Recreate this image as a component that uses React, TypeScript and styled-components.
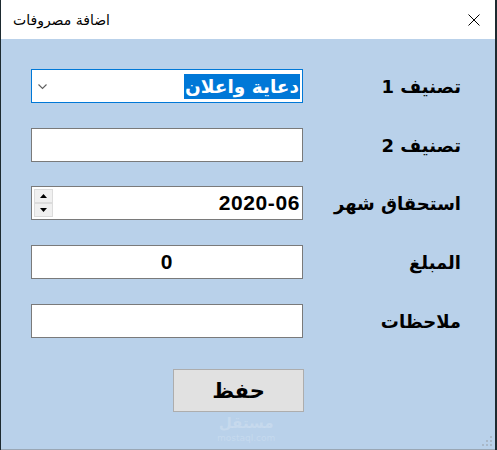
import React from "react";
import styled, { createGlobalStyle } from "styled-components";

const GlobalStyle = createGlobalStyle`
  html, body {
    margin: 0;
    padding: 0;
    background: #1d2a30;
  }
  body {
    width: 497px;
    height: 450px;
    overflow: hidden;
  }
`;

const Window = styled.div`
  margin-left: 1px;
  width: 494px;
  height: 449px;
  display: flex;
  flex-direction: column;
  background: #b9d1ea;
  border-bottom: 1px solid #9aa7b4;
`;

const TitleBar = styled.div`
  height: 39px;
  flex: none;
  background: #ffffff;
  display: flex;
  align-items: center;
  justify-content: space-between;
  padding: 0 15px 0 12px;
  box-sizing: border-box;
`;

const Title = styled.span`
  font-family: "DejaVu Sans", sans-serif;
  font-size: 14px;
  color: #000;
  direction: rtl;
`;

const Client = styled.div`
  position: relative;
  flex: 1;
  display: grid;
  grid-template-columns: 272px 1fr;
  row-gap: 24.7px;
  align-content: start;
  padding: 30px 34px 0 30px;
`;

const Label = styled.div`
  font-family: "DejaVu Sans", sans-serif;
  font-weight: bold;
  font-size: 18px;
  color: #000;
  direction: rtl;
  text-align: right;
  align-self: center;
  padding-top: 1px;
`;

const Field = styled.div<{ $focused?: boolean; $align?: string }>`
  height: 34px;
  box-sizing: border-box;
  background: #fff;
  border: 1px solid ${(p) => (p.$focused ? "#0078d7" : "#7a7a7a")};
  display: flex;
  align-items: center;
  justify-content: ${(p) => p.$align || "flex-end"};
  padding: 0 2px;
  position: relative;
`;

const Selected = styled.span`
  font-family: "DejaVu Sans", sans-serif;
  font-weight: bold;
  font-size: 18.5px;
  color: #fff;
  background: #0078d7;
  direction: rtl;
  line-height: 25px;
  padding: 0 1px;
`;

const Chevron = styled.svg`
  position: absolute;
  left: 6px;
  top: 14px;
`;

const Value = styled.span`
  font-family: "Liberation Sans", sans-serif;
  font-weight: bold;
  font-size: 21px;
  color: #000;
  letter-spacing: 0.6px;
`;

const Spinner = styled.div`
  position: absolute;
  left: 2px;
  top: 2px;
  display: flex;
  flex-direction: column;
`;

const SpinButton = styled.div`
  width: 19px;
  height: 14px;
  box-sizing: border-box;
  background: #f0f0f0;
  border: 1px solid #dcdcdc;
  display: flex;
  align-items: center;
  justify-content: center;
`;

const SaveButton = styled.button`
  grid-column: 1;
  justify-self: end;
  width: 131px;
  height: 43px;
  margin-top: 7px;
  margin-right: -1px;
  background: #e1e1e1;
  border: 1px solid #adadad;
  font-family: "DejaVu Sans", sans-serif;
  font-weight: bold;
  font-size: 21px;
  color: #000;
  padding: 0;
`;

const Watermark = styled.div`
  position: absolute;
  left: 216px;
  top: 376px;
  display: flex;
  flex-direction: column;
  align-items: center;
  gap: 2px;
  color: rgba(255, 255, 255, 0.2);
  font-family: "DejaVu Sans", sans-serif;
  pointer-events: none;
`;

const WmArabic = styled.span`
  font-size: 15px;
  font-weight: bold;
  line-height: 16px;
`;

const WmLatin = styled.span`
  font-size: 9px;
  line-height: 10px;
`;

const Grip = styled.svg`
  position: absolute;
  right: 2px;
  bottom: 2px;
`;

const rows = [
  { label: "تصنيف 1", kind: "combo" },
  { label: "تصنيف 2", kind: "text" },
  { label: "استحقاق شهر", kind: "date" },
  { label: "المبلغ", kind: "amount" },
  { label: "ملاحظات", kind: "text" },
];

function renderField(kind: string) {
  if (kind === "combo") {
    return (
      <Field $focused>
        <Chevron width="9" height="6" viewBox="0 0 9 6">
          <path d="M0.5 0.5 L4.5 4.5 L8.5 0.5" fill="none" stroke="#606060" strokeWidth="1.1" />
        </Chevron>
        <Selected>دعاية واعلان</Selected>
      </Field>
    );
  }
  if (kind === "date") {
    return (
      <Field>
        <Spinner>
          <SpinButton>
            <svg width="7" height="4" viewBox="0 0 7 4">
              <path d="M0 4 L3.5 0 L7 4 Z" fill="#000" />
            </svg>
          </SpinButton>
          <SpinButton>
            <svg width="7" height="4" viewBox="0 0 7 4">
              <path d="M0 0 L3.5 4 L7 0 Z" fill="#000" />
            </svg>
          </SpinButton>
        </Spinner>
        <Value>2020-06</Value>
      </Field>
    );
  }
  if (kind === "amount") {
    return (
      <Field $align="center">
        <Value>0</Value>
      </Field>
    );
  }
  return <Field />;
}

export default function App() {
  return (
    <>
      <GlobalStyle />
      <Window>
        <TitleBar>
          <Title>اضافة مصروفات</Title>
          <svg width="12" height="12" viewBox="0 0 12 12">
            <path d="M0.5 0.5 L11.5 11.5 M11.5 0.5 L0.5 11.5" stroke="#000" strokeWidth="1" />
          </svg>
        </TitleBar>
        <Client>
          {rows.map((r, i) => (
            <React.Fragment key={i}>
              {renderField(r.kind)}
              <Label>{r.label}</Label>
            </React.Fragment>
          ))}
          <SaveButton>حفظ</SaveButton>
          <Watermark>
            <WmArabic>مستقل</WmArabic>
            <WmLatin>mostaql.com</WmLatin>
          </Watermark>
          <Grip width="11" height="11" viewBox="0 0 11 11">
            <rect x="8" y="0" width="2" height="2" fill="#a9b8c8" />
            <rect x="4" y="4" width="2" height="2" fill="#a9b8c8" />
            <rect x="8" y="4" width="2" height="2" fill="#a9b8c8" />
            <rect x="0" y="8" width="2" height="2" fill="#a9b8c8" />
            <rect x="4" y="8" width="2" height="2" fill="#a9b8c8" />
            <rect x="8" y="8" width="2" height="2" fill="#a9b8c8" />
          </Grip>
        </Client>
      </Window>
    </>
  );
}
